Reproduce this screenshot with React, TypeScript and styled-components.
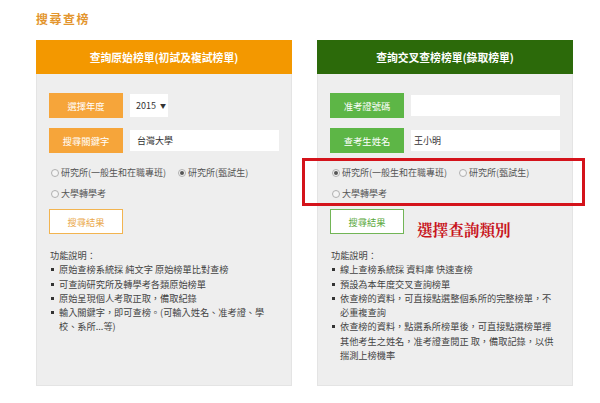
import React from "react";
import styled, { createGlobalStyle } from "styled-components";

const GlobalStyle = createGlobalStyle`
  body {
    margin: 0;
    background: #ffffff;
    font-family: "Noto Sans CJK TC", "Noto Sans", sans-serif;
    text-spacing-trim: space-all;
  }
`;

const Page = styled.div`
  padding: 11px 0 0 36px;
`;

const Title = styled.h1`
  margin: 0 0 13px 0;
  height: 16px;
  line-height: 16px;
  font-size: 12px;
  font-weight: 700;
  letter-spacing: 1.5px;
  color: #e3952d;
`;

const Panels = styled.div`
  display: flex;
  gap: 25px;
`;

const Panel = styled.section`
  position: relative;
  width: 256px;
  display: flex;
  flex-direction: column;
`;

const Header = styled.div<{ $bg: string }>`
  height: 34px;
  display: flex;
  align-items: center;
  justify-content: center;
  background: ${(p) => p.$bg};
  color: #ffffff;
  font-size: 10.8px;
  font-weight: 700;
`;

const Body = styled.div`
  height: 312px;
  box-sizing: border-box;
  padding: 19px 12px 0 12px;
  background: #eeeeee;
  border: 1px solid #e4e4e4;
  border-top: none;
  display: flex;
  flex-direction: column;
`;

const FieldRow = styled.div`
  display: flex;
  align-items: center;
  gap: 7px;
  height: 25px;
  margin-bottom: 10px;
`;

const FieldLabel = styled.div<{ $bg: string }>`
  width: 74px;
  height: 25px;
  flex-shrink: 0;
  display: flex;
  align-items: center;
  justify-content: center;
  background: ${(p) => p.$bg};
  color: #ffffff;
  font-size: 9.3px;
`;

const SelectBox = styled.div`
  width: 38px;
  height: 23px;
  box-sizing: border-box;
  padding: 0 6px 0 6px;
  display: flex;
  align-items: center;
  justify-content: space-between;
  background: #ffffff;
  color: #333333;
  font-size: 9px;
`;

const Caret = styled.span`
  font-size: 6px;
  margin-left: 4px;
`;

const TextBox = styled.div<{ $inset: number }>`
  flex: 1;
  height: 21px;
  box-sizing: border-box;
  padding-left: ${(p) => p.$inset}px;
  display: flex;
  align-items: center;
  background: #ffffff;
  color: #333333;
  font-size: 9px;
`;

const RadioGroup = styled.div`
  margin-top: -1px;
  padding-left: 2px;
  display: flex;
  flex-direction: column;
`;

const RadioRow = styled.div`
  display: flex;
  align-items: center;
  gap: 12px;
  height: 21px;
`;

const RadioLabel = styled.label`
  display: flex;
  align-items: center;
  gap: 2px;
  font-size: 9px;
  color: #555555;
`;

const RadioDot = styled.span<{ $checked?: boolean }>`
  width: 8px;
  height: 8px;
  box-sizing: border-box;
  border-radius: 50%;
  border: 1px solid #b0b0b0;
  background: #f4f4f4;
  display: flex;
  align-items: center;
  justify-content: center;
  &::after {
    content: "";
    width: 4px;
    height: 4px;
    border-radius: 50%;
    background: ${(p) => (p.$checked ? "#555555" : "transparent")};
  }
`;

const ResultButton = styled.div<{ $color: string; $text: string }>`
  margin-top: 5px;
  width: 74px;
  height: 25px;
  box-sizing: border-box;
  border: 1px solid ${(p) => p.$color};
  background: #ffffff;
  color: ${(p) => p.$text};
  font-size: 9.3px;
  display: flex;
  align-items: center;
  justify-content: center;
`;

const DescTitle = styled.div`
  margin-top: 14px;
  font-size: 9.2px;
  line-height: 14.2px;
  color: #444444;
  padding-left: 1px;
`;

const DescList = styled.ul`
  margin: 0;
  padding: 0 0 0 10px;
  width: 214px;
  list-style: none;
  font-size: 9.2px;
  line-height: 14.3px;
  color: #444444;
`;

const DescItem = styled.li`
  position: relative;
  &::before {
    content: "";
    position: absolute;
    left: -8px;
    top: 6px;
    width: 3px;
    height: 3px;
    background: #333333;
  }
`;

const HighlightBox = styled.div`
  position: absolute;
  left: -15px;
  top: 118px;
  width: 283px;
  height: 48px;
  box-sizing: border-box;
  border: 3px solid #d4131b;
  pointer-events: none;
`;

const Annotation = styled.div`
  position: absolute;
  left: 100px;
  top: 179px;
  font-family: "Noto Serif CJK TC", "Noto Sans CJK TC", serif;
  font-size: 15.6px;
  font-weight: 700;
  line-height: 20px;
  color: #c8161d;
`;

const ORANGE = "#f39800";
const ORANGE_LABEL = "#f6a53a";
const GREEN = "#2c6a0a";
const GREEN_LABEL = "#5db646";

const App: React.FC = () => {
  return (
    <>
      <GlobalStyle />
      <Page>
        <Title>搜尋查榜</Title>
        <Panels>
          <Panel>
            <Header $bg={ORANGE}>查詢原始榜單(初試及複試榜單)</Header>
            <Body>
              <FieldRow>
                <FieldLabel $bg={ORANGE_LABEL}>選擇年度</FieldLabel>
                <SelectBox>
                  2015<Caret>▼</Caret>
                </SelectBox>
              </FieldRow>
              <FieldRow>
                <FieldLabel $bg={ORANGE_LABEL}>搜尋關鍵字</FieldLabel>
                <TextBox $inset={7}>台灣大學</TextBox>
              </FieldRow>
              <RadioGroup>
                <RadioRow>
                  <RadioLabel>
                    <RadioDot />
                    研究所(一般生和在職專班)
                  </RadioLabel>
                  <RadioLabel>
                    <RadioDot $checked />
                    研究所(甄試生)
                  </RadioLabel>
                </RadioRow>
                <RadioRow>
                  <RadioLabel>
                    <RadioDot />
                    大學轉學考
                  </RadioLabel>
                </RadioRow>
              </RadioGroup>
              <ResultButton $color="#f2b450" $text="#eaa94c">
                搜尋結果
              </ResultButton>
              <DescTitle>功能說明：</DescTitle>
              <DescList>
                <DescItem>原始查榜系統採 純文字 原始榜單比對查榜</DescItem>
                <DescItem>可查詢研究所及轉學考各類原始榜單</DescItem>
                <DescItem>原始呈現個人考取正取，備取紀錄</DescItem>
                <DescItem>輸入關鍵字，即可查榜。(可輸入姓名、准考證、學校、系所...等)</DescItem>
              </DescList>
            </Body>
          </Panel>

          <Panel>
            <Header $bg={GREEN}>查詢交叉查榜榜單(錄取榜單)</Header>
            <Body>
              <FieldRow>
                <FieldLabel $bg={GREEN_LABEL}>准考證號碼</FieldLabel>
                <TextBox $inset={3} />
              </FieldRow>
              <FieldRow>
                <FieldLabel $bg={GREEN_LABEL}>查考生姓名</FieldLabel>
                <TextBox $inset={3}>王小明</TextBox>
              </FieldRow>
              <RadioGroup>
                <RadioRow>
                  <RadioLabel>
                    <RadioDot $checked />
                    研究所(一般生和在職專班)
                  </RadioLabel>
                  <RadioLabel>
                    <RadioDot />
                    研究所(甄試生)
                  </RadioLabel>
                </RadioRow>
                <RadioRow>
                  <RadioLabel>
                    <RadioDot />
                    大學轉學考
                  </RadioLabel>
                </RadioRow>
              </RadioGroup>
              <ResultButton $color="#72b556" $text="#5aa83c">
                搜尋結果
              </ResultButton>
              <DescTitle>功能說明：</DescTitle>
              <DescList>
                <DescItem>線上查榜系統採 資料庫 快速查榜</DescItem>
                <DescItem>預設為本年度交叉查詢榜單</DescItem>
                <DescItem>依查榜的資料，可直接點選整個系所的完整榜單，不必重複查詢</DescItem>
                <DescItem>
                  依查榜的資料，點選系所榜單後，可直接點選榜單裡其他考生之姓名，准考證查閱正 取，備取記錄，以供揣測上榜機率
                </DescItem>
              </DescList>
            </Body>
            <HighlightBox />
            <Annotation>選擇查詢類別</Annotation>
          </Panel>
        </Panels>
      </Page>
    </>
  );
};

export default App;
